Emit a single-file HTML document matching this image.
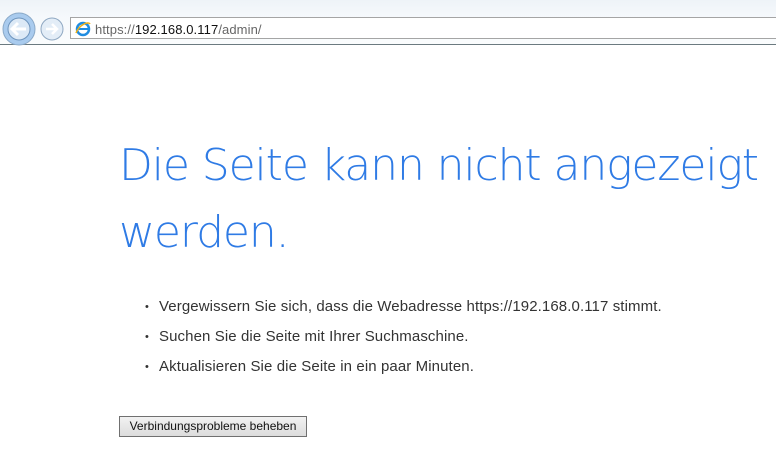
<!DOCTYPE html>
<html><head><style>
body{margin:0;width:776px;height:461px;overflow:hidden;background:#fff;font-family:"Liberation Sans",sans-serif;position:relative}
.top{position:absolute;left:0;top:0;width:776px;height:45px;background:linear-gradient(#eef3f8,#f6f9fc 40%,#fafcfd)}
.addr{position:absolute;left:70px;top:17px;width:710px;height:22px;background:#fff;border-top:1px solid #a5a5a5;border-bottom:1px solid #a5a5a5;border-left:1px solid #a5a5a5;box-sizing:border-box}
.line{position:absolute;left:0;top:44px;width:776px;height:1px;background:#6b7a80}
.url{position:absolute;left:95px;top:22px;font-size:13px;color:#666;letter-spacing:0.1px}
.url b{font-weight:normal;color:#111}
h1{position:absolute;left:119px;top:132px;margin:0;font-family:"DejaVu Sans","Liberation Sans",sans-serif;font-weight:200;font-size:44px;line-height:67px;color:#2f7be5;letter-spacing:-1.1px;width:660px}
ul{position:absolute;left:145px;top:297px;margin:0;padding:0;list-style:none;font-size:15px;color:#333;letter-spacing:0.1px}
li{height:30px;line-height:20px}
li:before{content:"•";display:inline-block;width:14px;font-size:11px;vertical-align:1px}
.btn{position:absolute;left:119px;top:416px;width:188px;height:21px;box-sizing:border-box;border:1px solid #707070;background:linear-gradient(#f2f2f2,#dcdcdc);font-size:12px;color:#111;text-align:center;line-height:19px}
</style></head><body>
<div class="top"></div>
<div class="addr"></div>
<div class="line"></div>
<svg style="position:absolute;left:0;top:10px" width="70" height="36">
<circle cx="19" cy="19" r="16" fill="#a9cbee" stroke="#8aa9c8"/>
<circle cx="19" cy="19" r="11" fill="#dce9f6" stroke="#6f95bd"/>
<path d="M26 19H13M18 13l-6 6 6 6" stroke="#fff" stroke-width="3" fill="none"/>
<circle cx="52" cy="19" r="11" fill="#e3edf7" stroke="#8fa8c2"/>
<path d="M46 19h10M52 14l5 5-5 5" stroke="#fff" stroke-width="2.5" fill="none"/>
</svg>
<svg style="position:absolute;left:74px;top:20px" width="18" height="18">
<circle cx="9" cy="9" r="6" fill="none" stroke="#1f8ce0" stroke-width="2.5"/>
<path d="M4 9h10" stroke="#1f8ce0" stroke-width="2"/>
<path d="M2 13c3-8 12-12 14-9" stroke="#f0b018" stroke-width="1.5" fill="none"/>
</svg>
<div class="url">https://<b>192.168.0.117</b>/admin/</div>
<h1>Die Seite kann nicht angezeigt werden.</h1>
<ul>
<li>Vergewissern Sie sich, dass die Webadresse https://192.168.0.117 stimmt.</li>
<li>Suchen Sie die Seite mit Ihrer Suchmaschine.</li>
<li>Aktualisieren Sie die Seite in ein paar Minuten.</li>
</ul>
<div class="btn">Verbindungsprobleme beheben</div>
</body></html>
